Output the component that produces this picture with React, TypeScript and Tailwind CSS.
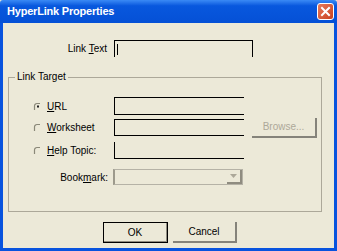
import React from "react";

const font = { fontFamily: '"Liberation Sans", Arial, sans-serif' };

function Radio({ checked, disabled }: { checked?: boolean; disabled?: boolean }) {
  return (
    <svg width="9" height="9" viewBox="0 0 9 9" className="shrink-0">
      <path d="M1.5 8 V4 A2.5 2.5 0 0 1 4 1.5 H7" fill="none" stroke={disabled ? "#b8b6a8" : "#8a8878"} strokeWidth="1.2" />
      {checked && <rect x="4" y="3.5" width="2" height="2" fill="#222" />}
    </svg>
  );
}

function Label({ text, u }: { text: string; u: number }) {
  return (
    <span>
      {text.slice(0, u)}
      <span className="underline">{text[u]}</span>
      {text.slice(u + 1)}
    </span>
  );
}

export default function App() {
  return (
    <div className="w-[337px] h-[251px] flex flex-col bg-[#ece9d8] text-[10px] text-black overflow-hidden" style={font}>
      {/* Title bar */}
      <div className="h-[23px] shrink-0 flex items-center justify-between pl-[7px] pr-[3px] bg-linear-to-b from-[#3a8af5] from-0% via-[#0858de] via-25% to-[#0550d6] rounded-t-[3px]">
        <span className="text-white font-bold text-[11px] tracking-[-0.2px]">HyperLink Properties</span>
        <div className="w-[17px] h-[17px] rounded-[3px] border border-white bg-linear-to-br from-[#e8795a] to-[#c8401c] flex items-center justify-center">
          <svg width="11" height="11" viewBox="0 0 11 11">
            <path d="M2 2 L9 9 M9 2 L2 9" stroke="white" strokeWidth="2" strokeLinecap="square" />
          </svg>
        </div>
      </div>

      {/* Body */}
      <div className="flex-1 flex flex-col border-x-[3px] border-b-[3px] border-[#0853de]">
        {/* Link Text row */}
        <div className="flex items-center mt-[17px] h-[17px]">
          <div className="w-[111px] text-right pr-[7px]">
            Link <Label text="Text" u={0} />
          </div>
          <div className="w-[139px] h-[17px] border-t border-x border-black flex items-center pl-[2px]">
            <div className="w-px h-[11px] bg-black" />
          </div>
        </div>

        {/* Group box */}
        <div className="relative mt-[20px] ml-[5px] w-[314px] h-[135px] border border-[#aca899] flex flex-col">
          <span className="absolute -top-[7px] left-[6px] px-[2px] bg-[#ece9d8] leading-[12px]">Link Target</span>

          {/* URL */}
          <div className="flex items-center mt-[19px] h-[18px]">
            <div className="w-[105px] flex items-center pl-[24px] gap-[5px]">
              <Radio checked />
              <Label text="URL" u={0} />
            </div>
            <div className="w-[130px] h-[18px] border-t border-l border-b border-black" />
          </div>

          {/* Worksheet */}
          <div className="flex items-center mt-[4px] h-[17px]">
            <div className="w-[105px] flex items-center pl-[24px] gap-[5px]">
              <Radio />
              <Label text="Worksheet" u={0} />
            </div>
            <div className="w-[130px] h-[17px] border-t border-l border-b border-black" />
            <div className="ml-[8px] w-[65px] h-[20px] shrink-0 flex items-center justify-center border-r-2 border-b-2 border-[#85837a] text-[#aca899] text-[10px]">
              Browse...
            </div>
          </div>

          {/* Help Topic */}
          <div className="flex items-center mt-[6px] h-[17px]">
            <div className="w-[105px] flex items-center pl-[24px] gap-[5px]">
              <Radio />
              <Label text="Help Topic:" u={0} />
            </div>
            <div className="w-[130px] h-[17px] border-l border-b border-black" />
          </div>

          {/* Bookmark */}
          <div className="flex items-center mt-[10px] h-[16px]">
            <div className="w-[104px] text-right pr-[5px]">
              Book<span className="underline">m</span>ark:
            </div>
            <div className="w-[130px] h-[16px] border border-[#b5b2a6] border-l-2 border-l-[#9d9a8c] flex justify-end">
              <div className="w-[15px] h-[14px] border-r-2 border-b-2 border-[#8f8c80] flex items-center justify-center">
                <svg width="7" height="4" viewBox="0 0 7 4">
                  <path d="M0 0 H7 L3.5 4 Z" fill="#aca899" />
                </svg>
              </div>
            </div>
          </div>
        </div>

        {/* Buttons */}
        <div className="flex mt-[10px] pl-[100px] gap-[5px]">
          <div className="w-[65px] h-[21px] border border-black flex items-center justify-center">
            <div className="w-full h-full border-r border-b border-[#8f8c80] flex items-center justify-center">OK</div>
          </div>
          <div className="w-[64px] h-[21px] border-r-2 border-b-2 border-[#85837a] flex items-center justify-center">
            Cancel
          </div>
        </div>
      </div>
    </div>
  );
}
